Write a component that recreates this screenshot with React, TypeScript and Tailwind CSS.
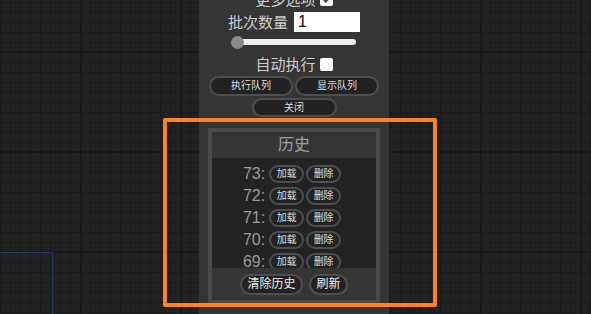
import React from "react";

const font = "font-['Liberation_Sans','Noto_Sans_CJK_SC',sans-serif]";

function PillButton({ children, className }: { children: React.ReactNode; className: string }) {
  return (
    <button
      className={`flex items-center justify-center rounded-full border-2 border-[#4e4e4e] bg-[#222222] text-[#dddddd] leading-none ${className}`}
    >
      {children}
    </button>
  );
}

function HistoryRow({ n }: { n: number }) {
  return (
    <div className="flex h-[22px] shrink-0 items-center justify-center pr-[4px]">
      <span className="mr-[4px] text-[16px] leading-none text-[#9a9a9a]">{n}:</span>
      <PillButton className="h-[18px] w-[35px] text-[10px]">加载</PillButton>
      <PillButton className="ml-[2px] h-[18px] w-[35px] text-[10px]">删除</PillButton>
    </div>
  );
}

export default function App() {
  const rows = [73, 72, 71, 70, 69, 68, 67];
  return (
    <div
      className={`relative h-[314px] w-[591px] overflow-hidden bg-[#222222] ${font} [background-image:linear-gradient(to_right,#181818_2px,transparent_2px),linear-gradient(to_bottom,#181818_2px,transparent_2px),linear-gradient(to_right,#1b1b1b_1px,transparent_1px),linear-gradient(to_bottom,#1b1b1b_1px,transparent_1px)] [background-size:100px_100px,100px_100px,10px_10px,10px_10px] [background-position:80px_0,0_51px,0_0,0_2px]`}
    >
      {/* group outline at bottom-left */}
      <div className="absolute left-[-100px] top-[252px] h-[200px] w-[153px] border border-[#22396a]" />

      <div className="flex h-full">
        <div className="ml-[199px] flex h-full w-[190px] flex-col items-center bg-[#353535] text-[15px] text-[#cccccc]">
          {/* row 1: more options (cut off) */}
          <div className="mt-[-11px] flex h-[20px] items-center gap-[4px]">
            <span className="leading-none">更多选项</span>
            <span className="flex h-[13px] w-[13px] items-center justify-center rounded-[2px] bg-white">
              <svg width="9" height="9" viewBox="0 0 9 9">
                <path d="M1.5 4.5 L3.8 6.8 L7.5 2" stroke="#333" strokeWidth="1.6" fill="none" />
              </svg>
            </span>
          </div>

          {/* batch count */}
          <div className="mt-[3px] flex h-[20px] items-center gap-[6px]">
            <span className="leading-none">批次数量</span>
            <div className="flex h-[20px] w-[66px] items-center bg-white pl-[4px] text-[16px] text-black">1</div>
          </div>

          {/* slider */}
          <div className="relative mt-[3px] h-[14px] w-[126px]">
            <div className="absolute left-[8px] right-[1px] top-[4px] h-[6px] rounded-full bg-[#eeeeee]" />
            <div className="absolute left-0 top-[1px] h-[13px] w-[13px] rounded-full bg-[#8a8a8a]" />
          </div>

          {/* auto queue */}
          <div className="mt-[5px] flex h-[20px] items-center gap-[4px]">
            <span className="leading-none">自动执行</span>
            <span className="h-[13px] w-[13px] rounded-[2px] bg-white" />
          </div>

          {/* queue buttons */}
          <div className="mt-[2px] flex gap-[2px]">
            <PillButton className="h-[20px] w-[84px] text-[10px]">执行队列</PillButton>
            <PillButton className="h-[20px] w-[84px] text-[10px]">显示队列</PillButton>
          </div>
          <PillButton className="mt-[2px] h-[19px] w-[85px] text-[10px]">关闭</PillButton>

          {/* history */}
          <div className="mt-[11px] flex h-[176px] w-[172px] flex-col border-4 border-[#4a4a4a]">
            <div className="flex h-[26px] shrink-0 items-center justify-center bg-[#353535] text-[16px] text-[#9d9d9d]">
              历史
            </div>
            <div className="flex h-[110px] shrink-0 flex-col overflow-hidden bg-[#232323] pt-[5px]">
              {rows.map((n) => (
                <HistoryRow key={n} n={n} />
              ))}
            </div>
            <div className="flex flex-1 items-center justify-center gap-[6px] bg-[#353535]">
              <PillButton className="h-[21px] w-[63px] text-[12px] text-[#eeeeee]">清除历史</PillButton>
              <PillButton className="h-[21px] w-[39px] text-[12px] text-[#eeeeee]">刷新</PillButton>
            </div>
          </div>
        </div>
      </div>

      {/* highlight overlay */}
      <div className="absolute left-[163px] top-[118px] h-[189px] w-[274px] rounded-[2px] border-4 border-[#fb8227]" />
    </div>
  );
}
